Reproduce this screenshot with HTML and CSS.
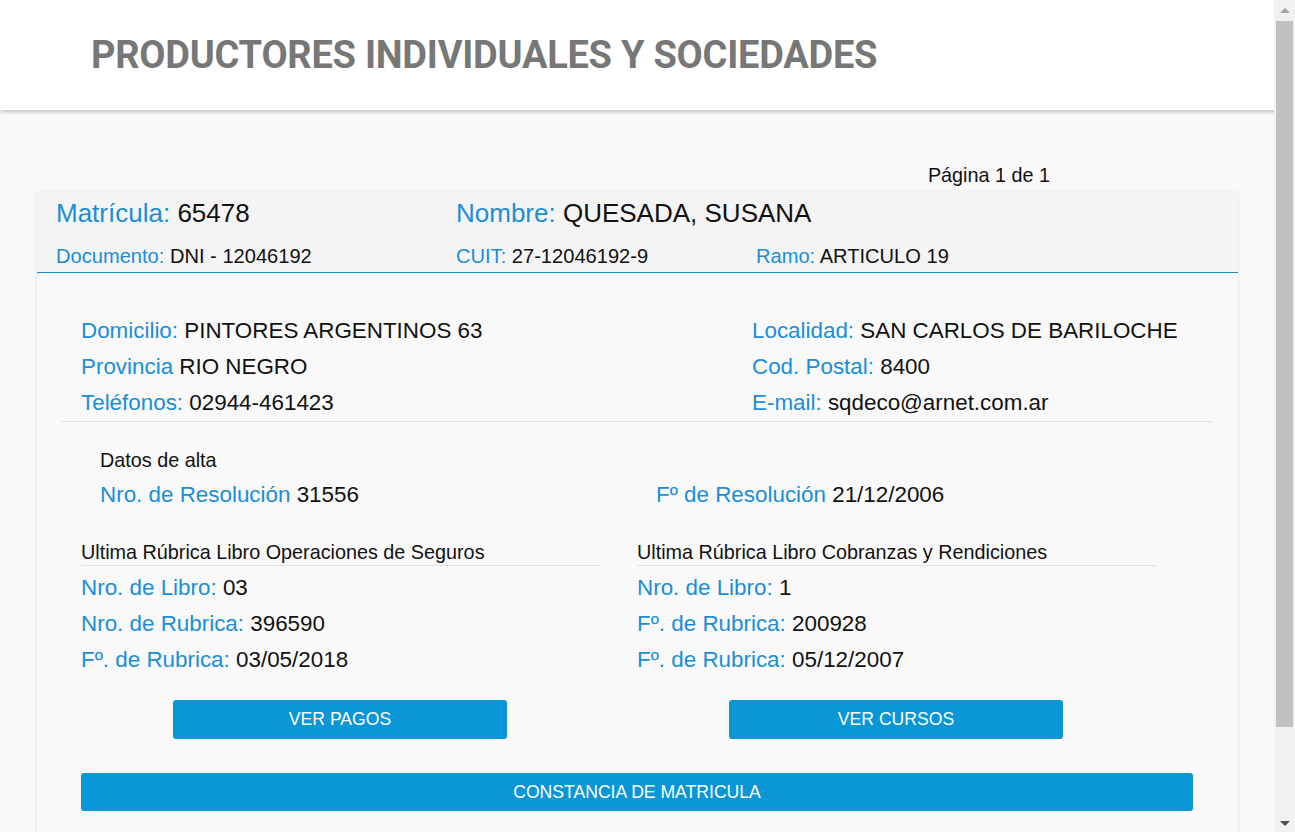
FILE: index.html
```html
<!DOCTYPE html>
<html lang="es">
<head>
<meta charset="utf-8">
<title>Productores individuales y sociedades</title>
<link rel="stylesheet" href="styles.css">
</head>
<body>
<header class="topbar">
  <h1 class="title">PRODUCTORES INDIVIDUALES Y SOCIEDADES</h1>
</header>
<main class="main">
  <div class="pager">Página 1 de 1</div>
  <section class="card">
    <div class="card-head">
      <div class="head-row big">
        <div><span class="lbl">Matrícula:</span> 65478</div>
        <div class="span2"><span class="lbl">Nombre:</span> QUESADA, SUSANA</div>
      </div>
      <div class="head-row small">
        <div><span class="lbl">Documento:</span> DNI - 12046192</div>
        <div><span class="lbl">CUIT:</span> 27-12046192-9</div>
        <div><span class="lbl">Ramo:</span> ARTICULO 19</div>
      </div>
    </div>
    <div class="card-body">
      <div class="info">
        <div class="info-col">
          <div class="line"><span class="lbl">Domicilio:</span> PINTORES ARGENTINOS 63</div>
          <div class="line"><span class="lbl">Provincia</span> RIO NEGRO</div>
          <div class="line"><span class="lbl">Teléfonos:</span> 02944-461423</div>
        </div>
        <div class="info-col">
          <div class="line"><span class="lbl">Localidad:</span> SAN CARLOS DE BARILOCHE</div>
          <div class="line"><span class="lbl">Cod. Postal:</span> 8400</div>
          <div class="line"><span class="lbl">E-mail:</span> sqdeco@arnet.com.ar</div>
        </div>
      </div>
      <div class="alta">
        <div class="alta-title">Datos de alta</div>
        <div class="alta-row">
          <div class="line"><span class="lbl">Nro. de Resolución</span> 31556</div>
          <div class="line"><span class="lbl">Fº de Resolución</span> 21/12/2006</div>
        </div>
      </div>
      <div class="rubricas">
        <div class="rub">
          <div class="rub-title">Ultima Rúbrica Libro Operaciones de Seguros</div>
          <div class="line"><span class="lbl">Nro. de Libro:</span> 03</div>
          <div class="line"><span class="lbl">Nro. de Rubrica:</span> 396590</div>
          <div class="line"><span class="lbl">Fº. de Rubrica:</span> 03/05/2018</div>
          <div class="btn-wrap"><button class="btn btn-mid">VER PAGOS</button></div>
        </div>
        <div class="rub">
          <div class="rub-title">Ultima Rúbrica Libro Cobranzas y Rendiciones</div>
          <div class="line"><span class="lbl">Nro. de Libro:</span> 1</div>
          <div class="line"><span class="lbl">Fº. de Rubrica:</span> 200928</div>
          <div class="line"><span class="lbl">Fº. de Rubrica:</span> 05/12/2007</div>
          <div class="btn-wrap"><button class="btn btn-mid">VER CURSOS</button></div>
        </div>
      </div>
      <div class="full">
        <button class="btn btn-full">CONSTANCIA DE MATRICULA</button>
      </div>
    </div>
  </section>
</main>
<div class="scrollbar" aria-hidden="true">
  <div class="sb-arrow sb-up"></div>
  <div class="sb-track"><div class="sb-thumb"></div></div>
  <div class="sb-arrow sb-down"></div>
</div>
</body>
</html>
```
FILE: styles.css
```css
html, body {
  margin: 0;
  padding: 0;
}
body {
  background: #f9f9f9;
  font-family: "Liberation Sans", Arial, sans-serif;
  color: #111;
}
.topbar {
  height: 110px;
  background: #fff;
  box-shadow: 0 2px 4px rgba(0, 0, 0, 0.22);
  position: relative;
  z-index: 1;
}
.title {
  margin: 0;
  padding: 33px 0 0 91px;
  font-family: Roboto, "Liberation Sans", sans-serif;
  font-weight: 700;
  font-size: 38px;
  line-height: 44px;
  color: #777;
  letter-spacing: -0.25px;
  white-space: nowrap;
}
.main {
  padding: 53px 0 0;
}
.pager {
  width: 1050px;
  text-align: right;
  font-size: 19.8px;
  line-height: 24px;
  color: #111;
}
.card {
  margin: 4px 0 0 37px;
  width: 1201px;
  background: #f9f9f9;
  box-shadow: 0 1px 3px rgba(0, 0, 0, 0.14);
  border-radius: 2px;
}
.card-head {
  background: #f4f4f4;
  padding: 0 19px;
  border-bottom: 1px solid #1d88c6;
}
.head-row {
  display: grid;
  grid-template-columns: 400px 300px 1fr;
}
.head-row.big {
  font-size: 26px;
  line-height: 44px;
}
.head-row.small {
  font-size: 20.1px;
  line-height: 32px;
  padding-top: 5px;
}
.span2 {
  grid-column: 2 / 4;
}
.lbl {
  color: #1b8ed7;
}
.card-body {
  padding: 0 26px 100px 24px;
}
.info {
  display: grid;
  grid-template-columns: 671px 1fr;
  padding: 40px 20px 0;
  border-bottom: 1px solid #e2e2e2;
}
.line {
  font-size: 22.4px;
  line-height: 36px;
  white-space: nowrap;
}
.alta {
  padding: 22px 0 0 39px;
}
.alta-title {
  font-size: 19.8px;
  line-height: 33px;
}
.alta-row {
  display: grid;
  grid-template-columns: 556px 1fr;
}
.rubricas {
  display: grid;
  grid-template-columns: 519px 519px;
  column-gap: 37px;
  padding: 26px 0 0 20px;
}
.rub-title {
  font-size: 19.8px;
  line-height: 26px;
  border-bottom: 1px solid #e2e2e2;
  margin-bottom: 4px;
}
.btn-wrap {
  display: flex;
  justify-content: center;
  padding-top: 22px;
}
.btn {
  border: 0;
  border-radius: 3px;
  background: #0996d7;
  color: #fff;
  font-family: "Liberation Sans", Arial, sans-serif;
  font-size: 17.6px;
  cursor: pointer;
  padding: 0;
}
.btn-mid {
  width: 334px;
  height: 39px;
  margin-left: -1px;
}
.full {
  padding: 34px 19px 0 20px;
}
.btn-full {
  width: 100%;
  height: 38px;
}

/* simulated browser scrollbar (overlay) */
.scrollbar {
  position: fixed;
  top: 0;
  right: 0;
  bottom: 0;
  width: 21px;
  background: #f1f1f1;
  display: flex;
  flex-direction: column;
  z-index: 10;
}
.sb-arrow {
  height: 17px;
  display: flex;
  align-items: center;
  justify-content: center;
}
.sb-up::before {
  content: "";
  border-left: 5px solid transparent;
  border-right: 5px solid transparent;
  border-bottom: 5px solid #a3a3a3;
  margin-top: 4px;
}
.sb-down::before {
  content: "";
  border-left: 5px solid transparent;
  border-right: 5px solid transparent;
  border-top: 5px solid #505050;
}
.sb-track {
  flex: 1;
  padding: 4px 2px 0;
}
.sb-thumb {
  height: 706px;
  background: #c1c1c1;
}
```
